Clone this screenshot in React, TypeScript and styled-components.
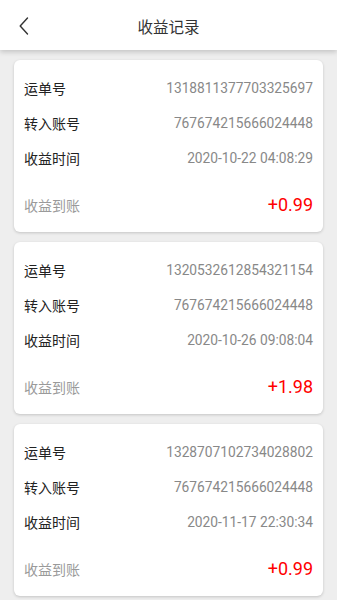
import React from "react";
import styled, { createGlobalStyle } from "styled-components";

const Global = createGlobalStyle`
  html, body { margin: 0; padding: 0; background: #eeeeee; }
  body { font-family: Roboto, "Noto Sans CJK SC", sans-serif; }
  * { box-sizing: border-box; }
`;

const Page = styled.div`
  width: 337px;
  min-height: 600px;
  background: #eeeeee;
  display: flex;
  flex-direction: column;
`;

const Header = styled.header`
  height: 50px;
  background: #ffffff;
  display: flex;
  align-items: center;
  justify-content: center;
  position: relative;
  box-shadow: 0 2px 5px rgba(0, 0, 0, 0.18);
  z-index: 1;
`;

const Back = styled.button`
  position: absolute;
  left: 14px;
  top: 14px;
  width: 20px;
  height: 24px;
  border: 0;
  padding: 0;
  background: transparent;
  display: flex;
  align-items: center;
  justify-content: center;
`;

const Title = styled.h1`
  margin: 0;
  padding-top: 2px;
  font-size: 15.5px;
  font-weight: 400;
  color: #333333;
`;

const List = styled.main`
  display: flex;
  flex-direction: column;
  gap: 10px;
  padding: 10px 14px;
`;

const Card = styled.section`
  background: #ffffff;
  border-radius: 6px;
  box-shadow: 0 1px 3px rgba(0, 0, 0, 0.18);
  padding: 10px 10px;
  display: flex;
  flex-direction: column;
`;

const Row = styled.div<{ $gap?: number }>`
  height: 35px;
  display: flex;
  align-items: center;
  justify-content: space-between;
  margin-top: ${(p) => p.$gap ?? 0}px;
`;

const Label = styled.span<{ $muted?: boolean }>`
  font-size: 14px;
  color: ${(p) => (p.$muted ? "#9a9a9a" : "#222222")};
`;

const Value = styled.span`
  font-size: 13.75px;
  color: #888888;
`;

const Amount = styled.span`
  font-size: 18px;
  color: #ff0000;
`;

const records = [
  { no: "1318811377703325697", acct: "767674215666024448", time: "2020-10-22 04:08:29", amt: "+0.99" },
  { no: "1320532612854321154", acct: "767674215666024448", time: "2020-10-26 09:08:04", amt: "+1.98" },
  { no: "1328707102734028802", acct: "767674215666024448", time: "2020-11-17 22:30:34", amt: "+0.99" },
];

export default function App() {
  return (
    <Page>
      <Global />
      <Header>
        <Back aria-label="返回">
          <svg width="10" height="18" viewBox="0 0 10 18">
            <path d="M8.5 1 L1.2 9 L8.5 17" fill="none" stroke="#333" strokeWidth="1.4" strokeLinecap="round" strokeLinejoin="round" />
          </svg>
        </Back>
        <Title>收益记录</Title>
      </Header>
      <List>
        {records.map((r) => (
          <Card key={r.no}>
            <Row>
              <Label>运单号</Label>
              <Value>{r.no}</Value>
            </Row>
            <Row>
              <Label>转入账号</Label>
              <Value>{r.acct}</Value>
            </Row>
            <Row>
              <Label>收益时间</Label>
              <Value>{r.time}</Value>
            </Row>
            <Row $gap={12}>
              <Label $muted>收益到账</Label>
              <Amount>{r.amt}</Amount>
            </Row>
          </Card>
        ))}
      </List>
    </Page>
  );
}
